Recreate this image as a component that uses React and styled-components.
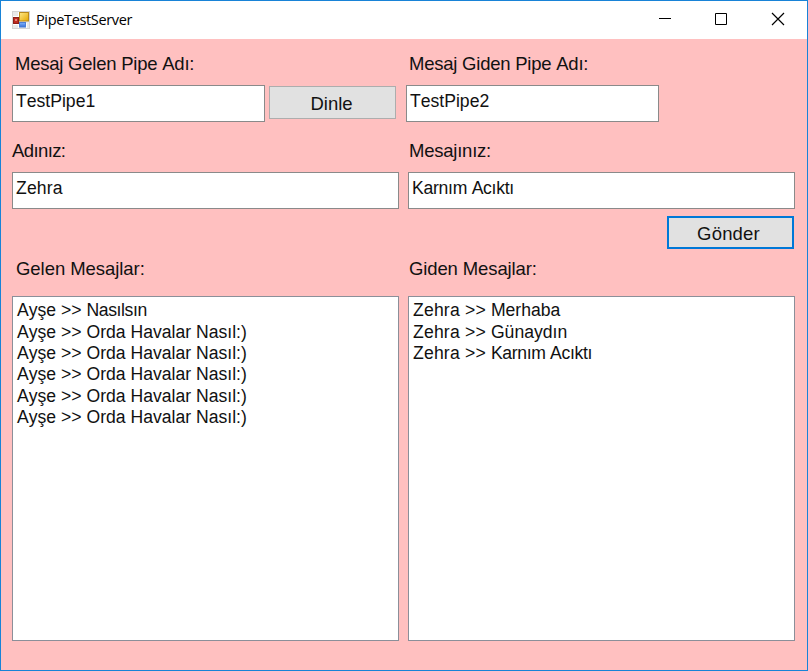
import React from "react";
import styled, { createGlobalStyle } from "styled-components";

const Global = createGlobalStyle`
  *, *::before, *::after { box-sizing: border-box; }
  body { margin: 0; background: #ffc0c0; }
`;

const Window = styled.main`
  width: 808px;
  height: 671px;
  display: flex;
  flex-direction: column;
  border: 1px solid #1883d7;
  background: #ffc0c0;
  color: #111;
  font-family: "Liberation Sans", Arial, sans-serif;
  font-kerning: none;
  overflow: hidden;
`;

const TitleBar = styled.header`
  height: 38px;
  flex: none;
  display: flex;
  align-items: center;
  padding: 0 0 0 11px;
  background: #fff;
`;

const AppIcon = styled.svg`
  width: 18px;
  height: 18px;
  flex: none;
  margin-bottom: 1px;
`;

const Title = styled.h1`
  flex: 1;
  margin: 0 0 0 6px;
  font: 400 14.5px/20px "Open Sans", "Noto Sans", sans-serif;
  letter-spacing: -0.35px;
  color: #000;
`;

const Caption = styled.button`
  width: ${(p) => p.$width || 57}px;
  height: 38px;
  padding: 0 0 2px;
  border: 0;
  background: none;
  display: flex;
  align-items: center;
  justify-content: center;
`;

const Glyph = styled.svg`
  width: 14px;
  height: 14px;
  fill: none;
  stroke: #000;
`;

const Form = styled.div`
  flex: 1;
  padding-left: 11px;
`;

const LabelRow = styled.div`
  display: grid;
  grid-template-columns: 396px 1fr;
  height: ${(p) => p.$height}px;
  padding-top: ${(p) => p.$top}px;
`;

const Label = styled.span`
  padding-left: ${(p) => p.$indent || 0}px;
  font-size: 18.5px;
  line-height: 22px;
  letter-spacing: ${(p) => p.$spacing ?? -0.23}px;
  white-space: nowrap;
`;

const FieldRow = styled.div`
  display: flex;
  align-items: flex-start;
  gap: ${(p) => p.$gap}px;
  height: 37px;
`;

const Field = styled.div`
  width: ${(p) => p.$width}px;
  height: 37px;
  padding: 5px 3px;
  border: 1px solid #8a8a8a;
  background: #fff;
  font-size: 17.6px;
  line-height: 20px;
  letter-spacing: ${(p) => p.$spacing || 0}px;
  white-space: nowrap;
`;

const PushButton = styled.button`
  width: 127px;
  height: 33px;
  padding: 2px ${(p) => (p.$primary ? 4 : 2)}px 0 0;
  border: ${(p) => (p.$primary ? "2px solid #0078d7" : "1px solid #adadad")};
  background: #e1e1e1;
  color: #111;
  font: 400 18.5px/22px "Liberation Sans", Arial, sans-serif;
  letter-spacing: ${(p) => (p.$primary ? 0.2 : 0)}px;
  font-kerning: none;
`;

const ListenSlot = styled.div`
  padding-top: 1px;
  margin: 0 5px 0 -1px;
`;

const ActionRow = styled.div`
  display: flex;
  justify-content: flex-end;
  height: 40px;
  padding: 7px 13px 0 0;
`;

const Lists = styled.div`
  display: flex;
  gap: 9px;
`;

const ListBox = styled.ul`
  width: 387px;
  height: 345px;
  margin: 0;
  padding: 3.4px 4px;
  list-style: none;
  border: 1px solid #8b8f99;
  background: #fff;
`;

const Item = styled.li`
  height: 21.3px;
  font-size: 17.6px;
  line-height: 21.3px;
  white-space: pre;
`;

const Run = styled.span`
  letter-spacing: ${(p) => p.$spacing}px;
`;

const reply = { text: "Orda Havalar Nasıl:)", spacing: 0 };
const incoming = [{ text: "Nasılsın", spacing: -0.4 }, ...Array(5).fill(reply)];
const outgoing = [
  { text: "Merhaba", spacing: 0 },
  { text: "Günaydın", spacing: 0 },
  { text: "Karnım Acıktı", spacing: -0.34 },
];

function MessageList({ sender, senderSpacing, messages }) {
  return (
    <ListBox>
      {messages.map((m, i) => (
        <Item key={i}>
          <Run $spacing={senderSpacing}>{`${sender} >> `}</Run>
          <Run $spacing={m.spacing}>{m.text}</Run>
        </Item>
      ))}
    </ListBox>
  );
}

function FormIcon() {
  return (
    <AppIcon viewBox="0 0 18 18">
      <defs>
        <linearGradient id="gold" x1="0" y1="0" x2="1" y2="1">
          <stop offset="0" stopColor="#ffe98a" />
          <stop offset="1" stopColor="#e5a800" />
        </linearGradient>
        <linearGradient id="blue" x1="0" y1="0" x2="0" y2="1">
          <stop offset="0" stopColor="#83b4fb" />
          <stop offset="1" stopColor="#376fd6" />
        </linearGradient>
      </defs>
      <rect x=".5" y=".5" width="17" height="17" fill="#e9e9e9" stroke="#d4d4d4" />
      <path d="M6.500 1v16M1 5.500h6M1 13.500h6M14.500 12v5" stroke="#fff" />
      <rect x="1.500" y="6.500" width="5" height="6" fill="#bd2a20" stroke="#8d1e18" />
      <rect x="3" y="8" width="2" height="2" fill="#e2837b" />
      <rect x="7.500" y="1.500" width="9" height="8.500" fill="url(#gold)" stroke="#b98a1c" />
      <rect x="7.500" y="11.500" width="6" height="4.500" fill="url(#blue)" stroke="#4c7fd6" />
    </AppIcon>
  );
}

export default function App() {
  return (
    <>
      <Global />
      <Window>
        <TitleBar>
          <FormIcon />
          <Title>PipeTestServer</Title>
          <Caption aria-label="Minimize" $width={56}>
            <Glyph viewBox="0 0 14 14"><path d="M1 6.500h12" /></Glyph>
          </Caption>
          <Caption aria-label="Maximize" $width={56}>
            <Glyph viewBox="0 0 14 14"><path d="M1.500 1.500h11v11h-11z" /></Glyph>
          </Caption>
          <Caption aria-label="Close" $width={58}>
            <Glyph viewBox="0 0 14 14"><path d="M1 1l12 12M13 1L1 13" strokeWidth="1.2" /></Glyph>
          </Caption>
        </TitleBar>
        <Form>
          <LabelRow $height={46} $top={14}>
            <Label $indent={3}>Mesaj Gelen Pipe Adı:</Label>
            <Label $indent={1}>Mesaj Giden Pipe Adı:</Label>
          </LabelRow>
          <FieldRow $gap={5}>
            <Field $width={253}>TestPipe1</Field>
            <ListenSlot><PushButton>Dinle</PushButton></ListenSlot>
            <Field $width={253}>TestPipe2</Field>
          </FieldRow>
          <LabelRow $height={50} $top={18}>
            <Label $spacing={-0.6}>Adınız:</Label>
            <Label $indent={1}>Mesajınız:</Label>
          </LabelRow>
          <FieldRow $gap={9}>
            <Field $width={387} $spacing={0.15}>Zehra</Field>
            <Field $width={387} $spacing={-0.28}>Karnım Acıktı</Field>
          </FieldRow>
          <ActionRow>
            <PushButton $primary>Gönder</PushButton>
          </ActionRow>
          <LabelRow $height={47} $top={9}>
            <Label $indent={4} $spacing={-0.05}>Gelen Mesajlar:</Label>
            <Label $indent={1} $spacing={-0.12}>Giden Mesajlar:</Label>
          </LabelRow>
          <Lists>
            <MessageList sender="Ayşe" senderSpacing={0} messages={incoming} />
            <MessageList sender="Zehra" senderSpacing={0.18} messages={outgoing} />
          </Lists>
        </Form>
      </Window>
    </>
  );
}
